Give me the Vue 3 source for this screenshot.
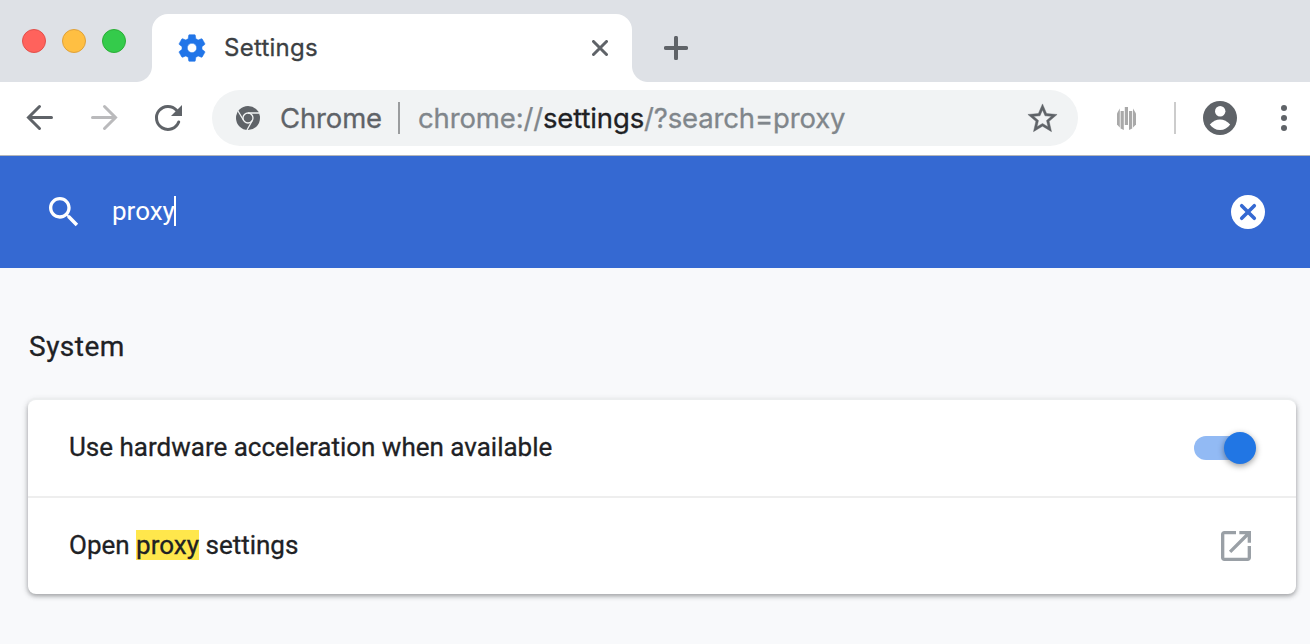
<script setup>
import { ref } from 'vue'

const query = ref('proxy')
const lights = ['red', 'yellow', 'green']
const stripes = [
  'M0 6.500L2.800 1.500V20.500L0 17.500z',
  'M3.600 4h3.200v19L3.600 21.500z',
  'M7.800 0h3.200v18H7.800z',
  'M12 4h3.200v17.500L12 23z',
  'M16 1.500L19 6.500V17.500L16 20.500z',
]
</script>

<template>
  <div class="window">
    <header class="tabstrip">
      <div class="lights">
        <span v-for="c in lights" :key="c" class="light" :class="c"></span>
      </div>
      <div class="tab">
        <svg class="gear" viewBox="0 0 24 24"><path d="M19.43 12.98c.04-.32.07-.64.07-.98s-.03-.66-.07-.98l2.11-1.65c.19-.15.24-.42.12-.64l-2-3.46c-.12-.22-.39-.3-.61-.22l-2.49 1c-.52-.4-1.08-.73-1.69-.98l-.38-2.65C14.46 2.18 14.25 2 14 2h-4c-.25 0-.46.18-.49.42l-.38 2.65c-.61.25-1.17.59-1.69.98l-2.49-1c-.23-.09-.49 0-.61.22l-2 3.46c-.13.22-.07.49.12.64l2.11 1.65c-.04.32-.07.65-.07.98s.03.66.07.98l-2.11 1.65c-.19.15-.24.42-.12.64l2 3.460c.12.22.39.3.61.22l2.49-1c.52.4 1.08.73 1.69.98l.38 2.65c.03.24.24.42.49.42h4c.25 0 .46-.18.49-.42l.38-2.650c.61-.25 1.17-.59 1.69-.98l2.49 1c.23.09.49 0 .61-.22l2-3.460c.12-.22.07-.49-.12-.64l-2.11-1.65zM12 15.500c-1.930 0-3.500-1.570-3.500-3.500s1.570-3.500 3.500-3.500 3.500 1.570 3.500 3.500-1.570 3.500-3.500 3.500z" /></svg>
        <span class="tab-title">Settings</span>
        <svg class="tab-close" viewBox="0 0 16 16"><path d="M1.500 1.500l13 13M14.500 1.500l-13 13" /></svg>
      </div>
      <svg class="new-tab" viewBox="0 0 24 24"><path d="M12 1.800v20.400M1.800 12h20.400" /></svg>
    </header>

    <div class="toolbar">
      <svg class="nav" viewBox="0 0 32 32"><path d="M27.500 15.500H5M15.500 4.500l-11 11 11 11" /></svg>
      <svg class="nav forward" viewBox="0 0 32 32"><path d="M4.500 15.500H27M16.500 4.500l11 11-11 11" /></svg>
      <svg class="nav" viewBox="0 0 32 32"><path d="M26.700 20A11.500 11.500 0 1 1 24.500 8.200" /><path class="solid" d="M30 3v11H19z" /></svg>
      <div class="omnibox">
        <svg class="chrome" viewBox="0 0 24 24">
          <circle cx="12" cy="12" r="12" />
          <g class="cuts"><circle cx="12" cy="12" r="5" /><path d="M12 7H23M7.700 14.500L2 5M16.300 14.500L11 24" /></g>
        </svg>
        <span class="origin">Chrome</span>
        <span class="bar"></span>
        <span class="url">chrome://<b>settings</b>/?search=proxy</span>
        <svg class="star" viewBox="0 0 24 24"><path d="M22 9.240l-7.190-.62L12 2 9.190 8.630 2 9.240l5.460 4.730L5.820 21 12 17.270 18.180 21l-1.630-7.030L22 9.240zM12 15.400l-3.760 2.270 1-4.280-3.320-2.880 4.380-.38L12 6.100l1.710 4.040 4.380.38-3.320 2.880 1 4.280L12 15.400z" /></svg>
      </div>
      <svg class="extension" viewBox="0 0 19 23">
        <path v-for="s in stripes" :key="s" :d="s" />
      </svg>
      <span class="divider"></span>
      <svg class="avatar" viewBox="0 0 34 34">
        <circle cx="17" cy="17" r="17" />
        <circle class="cut" cx="17.200" cy="10.200" r="5.200" />
        <path class="cut" d="M6.800 23.500C9.500 20.400 13.500 18.500 17 18.500s7.500 1.900 10.200 5C24.800 27 21.200 29 17 29S9.200 27 6.800 23.500z" />
      </svg>
      <svg class="menu" viewBox="0 0 6 26"><circle cx="3" cy="3" r="3" /><circle cx="3" cy="13" r="3" /><circle cx="3" cy="23" r="3" /></svg>
    </div>

    <div class="search">
      <svg class="search-icon" viewBox="0 0 24 24"><path d="M15.500 14h-.79l-.28-.27C15.410 12.590 16 11.110 16 9.500 16 5.910 13.090 3 9.500 3S3 5.910 3 9.500 5.910 16 9.500 16c1.610 0 3.090-.59 4.230-1.570l.27.28v.79l5 4.990L20.490 19l-4.990-5zm-6 0C7.010 14 5 11.990 5 9.500S7.010 5 9.500 5 14 7.010 14 9.500 11.990 14 9.500 14z" /></svg>
      <span class="query">{{ query }}</span><span class="caret"></span>
      <svg class="clear" viewBox="0 0 34 34"><circle cx="17" cy="17" r="17" /><path d="M10.700 10.700l12.600 12.600M23.300 10.700L10.700 23.300" /></svg>
    </div>

    <main>
      <h2>System</h2>
      <section class="card">
        <div class="row">
          <span class="label">Use hardware acceleration when available</span>
          <span class="toggle"><span class="knob"></span></span>
        </div>
        <div class="row">
          <span class="label">Open <mark>proxy</mark> settings</span>
          <svg class="open" viewBox="0 0 24 24"><path d="M19 19H5V5h7V3H5c-1.110 0-2 .9-2 2v14c0 1.100.89 2 2 2h14c1.100 0 2-.9 2-2v-7h-2v7zM14 3v2h3.590l-9.830 9.830 1.410 1.410L19 6.410V10h2V3h-7z" /></svg>
        </div>
      </section>
    </main>
  </div>
</template>

<style>
body { margin: 0; overflow: hidden; }
</style>

<style scoped>
.window {
  width: 1310px;
  height: 644px;
  overflow: hidden;
  background: #f8f9fb;
  color: #202124;
  font-family: Roboto, "Liberation Sans", sans-serif;
}
svg { display: block; flex: none; }
.tabstrip {
  display: flex;
  height: 82px;
  background: #dee1e6;
}
.lights {
  display: flex;
  gap: 16px;
  width: 130px;
  padding: 29px 0 0 22px;
}
.light {
  box-sizing: border-box;
  width: 24px;
  height: 24px;
  border: 1px solid;
  border-radius: 50%;
}
.red { background: #ff625c; border-color: #e2504b; }
.yellow { background: #ffbf42; border-color: #dfa13a; }
.green { background: #34cb4b; border-color: #2bae36; }
.tab {
  position: relative;
  box-sizing: border-box;
  display: flex;
  align-items: center;
  width: 480px;
  height: 68px;
  margin-top: 14px;
  padding: 0 24px;
  border-radius: 16px 16px 0 0;
  background: #fff;
}
.tab::before,
.tab::after {
  content: "";
  position: absolute;
  bottom: 0;
  width: 16px;
  height: 16px;
}
.tab::before {
  right: 100%;
  background: radial-gradient(circle at 0 0, transparent 15.500px, #fff 16.500px);
}
.tab::after {
  left: 100%;
  background: radial-gradient(circle at 100% 0, transparent 15.500px, #fff 16.500px);
}
.gear {
  width: 32px;
  height: 32px;
  fill: #2175e8;
  stroke: #2175e8;
  stroke-width: .4;
}
.tab-title {
  flex: 1;
  margin-left: 16px;
  font: 24px/32px Inter, Roboto, sans-serif;
  letter-spacing: .25px;
  color: #3c4043;
  -webkit-text-stroke: .3px;
}
.tab-close {
  width: 16px;
  height: 16px;
  fill: none;
  stroke: #5f6368;
  stroke-width: 3;
  stroke-linecap: round;
}
.new-tab {
  width: 24px;
  height: 24px;
  margin: 36px 0 0 32px;
  fill: none;
  stroke: #5f6368;
  stroke-width: 4;
  stroke-linecap: round;
}
.toolbar {
  box-sizing: border-box;
  display: flex;
  align-items: center;
  height: 74px;
  padding: 0 23px 1px 24px;
  border-bottom: 1px solid #b4b6ba;
  background: #fff;
}
.nav {
  width: 32px;
  height: 32px;
  margin: 0 32px 0 0;
  fill: none;
  stroke: #5f6368;
  stroke-width: 3;
  stroke-linecap: round;
}
.forward { stroke: #bababc; }
.solid { fill: #5f6368; stroke: none; }
.omnibox {
  box-sizing: border-box;
  display: flex;
  align-items: center;
  width: 866px;
  height: 56px;
  margin-left: -4px;
  padding: 0 18px 0 24px;
  border-radius: 28px;
  background: #f1f3f4;
  font: 27.500px/40px Inter, Roboto, sans-serif;
  letter-spacing: -.14px;
  -webkit-text-stroke: .3px;
}
.chrome { width: 24px; height: 24px; fill: #5f6368; }
.cuts { fill: none; stroke: #f1f3f4; stroke-width: 1.300; }
.origin { width: 102px; margin-left: 20px; color: #5f6368; }
.bar { width: 2px; height: 32px; margin: 0 18px 0 16px; background: #9a9c9e; }
.url { flex: 1; color: #80868b; white-space: nowrap; }
.url b { font-weight: 400; color: #202124; }
.star { width: 35px; height: 35px; fill: #5f6368; stroke: #5f6368; stroke-width: .3; }
.extension { width: 19px; height: 23px; margin: 0 38px 0 39px; fill: #a9a9a9; }
.divider { width: 2px; height: 32px; background: #ccc; }
.avatar { width: 34px; height: 34px; margin: 0 auto 0 27px; fill: #5f6368; }
.cut { fill: #fff; }
.menu { width: 6px; height: 26px; fill: #5f6368; }
.search {
  box-sizing: border-box;
  display: flex;
  align-items: center;
  height: 112px;
  padding: 0 45px 0 44px;
  background: #3569d2;
  color: #fff;
  font-size: 26px;
  line-height: 32px;
}
.search-icon { width: 40px; height: 40px; fill: #fff; }
.query { margin: 0 -1px 2px 28px; }
.caret { width: 2px; height: 30px; margin: 0 auto 2px 0; background: #fff; }
.clear { width: 34px; height: 34px; fill: #fff; }
.clear path { stroke: #3569d2; stroke-width: 3.600; stroke-linecap: round; }
main { padding: 61px 14px 0 28px; }
h2 {
  margin: 0 0 35px;
  padding-left: 1px;
  font-size: 28px;
  font-weight: 400;
  line-height: 36px;
  letter-spacing: .5px;
  -webkit-text-stroke: .3px;
}
.card {
  border-radius: 8px;
  background: #fff;
  box-shadow: 0 -2px 0 #eceeef, 0 2px 4px rgba(60, 64, 67, .38), 0 1px 6px 1px rgba(60, 64, 67, .16);
}
.row {
  display: flex;
  align-items: center;
  justify-content: space-between;
  height: 96px;
  padding: 0 40px;
  font-size: 26px;
  line-height: 30px;
}
.row + .row { border-top: 2px solid #eee; }
.label { padding: 0 0 2px 1px; -webkit-text-stroke: .3px; }
mark { background: #ffe74c; color: inherit; }
.toggle {
  box-sizing: border-box;
  display: flex;
  align-items: center;
  width: 56px;
  height: 24px;
  margin-right: 6px;
  padding-left: 30px;
  border-radius: 12px;
  background: #92baf4;
}
.knob {
  flex: none;
  width: 32px;
  height: 32px;
  border-radius: 50%;
  background: #2176e4;
  box-shadow: 0 2px 6px rgba(0, 0, 0, .4);
}
.open { width: 40px; height: 40px; fill: #9aa0a6; }
</style>
